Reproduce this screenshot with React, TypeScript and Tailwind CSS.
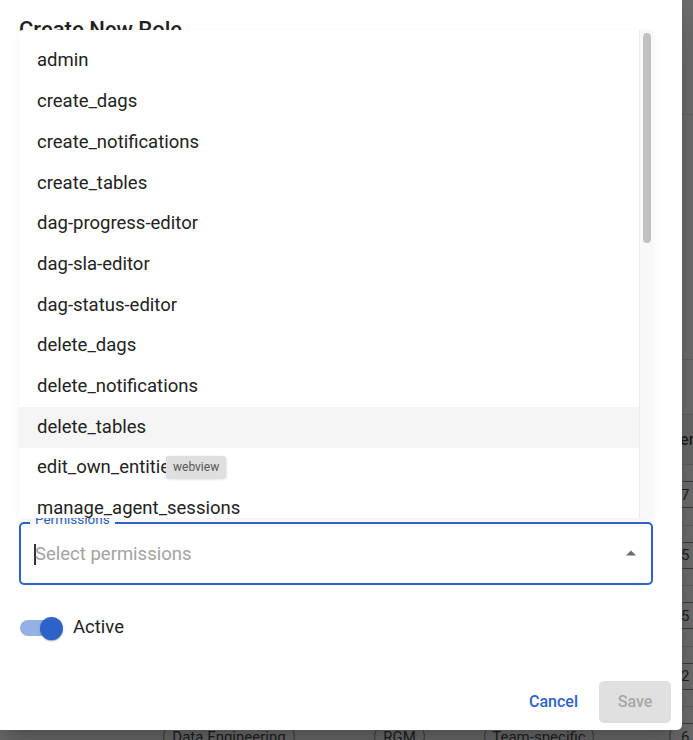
import React from "react";

const items = [
  "admin",
  "create_dags",
  "create_notifications",
  "create_tables",
  "dag-progress-editor",
  "dag-sla-editor",
  "dag-status-editor",
  "delete_dags",
  "delete_notifications",
  "delete_tables",
  "edit_own_entities",
  "manage_agent_sessions",
  "manage_roles",
];

const rowCounts = ["7", "5", "5", "2", "6"];

const chip =
  "shrink-0 whitespace-nowrap h-[27px] rounded-full border border-[#3a3a3a] flex items-center justify-center text-[15px] text-[#1e1e1e]";

function BgRow({ n }: { n: string }) {
  return (
    <div className="h-[60.5px] flex items-center border-b border-[#5e5e5e] pl-[163px] shrink-0">
      <div className={chip + " w-[132px]"}>Data Engineering</div>
      <div className={chip + " ml-[79px] w-[51px]"}>RGM</div>
      <div className={chip + " ml-[59px] w-[110px]"}>Team-specific</div>
      <div className={chip + " ml-[75px] pl-[11px] pr-[10px]"}>{n} permissions</div>
    </div>
  );
}

export default function App() {
  return (
    <div
      className="relative w-full h-[740px] overflow-hidden bg-[#6c6c6c]"
      style={{ fontFamily: "Roboto, 'Noto Sans', sans-serif" }}
    >
      {/* background table under the overlay */}
      <div className="flex flex-col">
        <div className="h-[115px] border-b border-[#606060] shrink-0" />
        <div className="h-[245px] border-b border-[#606060] shrink-0" />
        <div className="h-[55px] border-b border-[#606060] shrink-0" />
        <div className="h-[50px] flex items-center border-b border-[#5e5e5e] bg-[#686868] pl-[670px] shrink-0 text-[16px] font-medium text-[#1e1e1e] whitespace-nowrap">
          Permissions
        </div>
        {rowCounts.map((n, i) => (
          <BgRow key={i} n={n} />
        ))}
      </div>

      {/* dialog */}
      <div className="absolute left-0 top-0 w-[682px] h-[730px] bg-white rounded-br-[5px] shadow-[0_11px_15px_-7px_rgba(0,0,0,0.2),0_24px_38px_3px_rgba(0,0,0,0.14)] flex flex-col">
        <div className="pl-[19px] pr-[29px] flex flex-col">
          <div className="pt-[14px] text-[22px] leading-[32px] font-medium text-[#1f1f1f]">
            Create New Role
          </div>
          {/* permissions field */}
          <div className="mt-[476px] relative h-[63px] border-2 border-[#2d63c8] rounded-[5px]">
            <div className="absolute left-[9px] top-[-13px] px-[5px] bg-white text-[13.5px] leading-[16px] text-[#2d63c8]">
              Permissions
            </div>
            <div className="h-full flex items-center pl-[13px] pt-[2px]">
              <span className="w-[1.5px] h-[21px] bg-[#333]" />
              <span className="text-[18.5px] text-[#a3a3a3] ml-[-0.5px]">Select permissions</span>
            </div>
            <svg
              className="absolute right-[15px] top-[26px]"
              width="10"
              height="6"
              viewBox="0 0 10 6"
            >
              <polygon points="0,5.5 5,0.5 10,5.5" fill="#6b6b6b" />
            </svg>
          </div>
          {/* switch */}
          <div className="mt-[31px] h-[24px] flex items-center">
            <div className="ml-[1px] relative w-[39px] h-[16px] rounded-full bg-[#94b0e4]">
              <div className="absolute left-[20px] top-[-3.5px] w-[23px] h-[23px] rounded-full bg-[#2d63c8] shadow-[0_2px_1px_-1px_rgba(0,0,0,0.2),0_1px_1px_0_rgba(0,0,0,0.14),0_1px_3px_0_rgba(0,0,0,0.12)]" />
            </div>
            <span className="ml-[14px] text-[18.5px] text-[#222]">Active</span>
          </div>
        </div>
        {/* actions */}
        <div className="mt-[41px] pr-[11px] flex justify-end items-center gap-[13px]">
          <button className="h-[42px] px-[8px] text-[16px] font-medium text-[#2d63c8]">
            Cancel
          </button>
          <button className="w-[72px] h-[42px] rounded-[5px] bg-[#e0e0e0] text-[16px] font-medium text-[#a6a6a6]">
            Save
          </button>
        </div>
      </div>

      {/* dropdown menu */}
      <div className="absolute left-[19px] top-[30px] w-[634px] h-[488px] bg-white rounded-[4px] overflow-hidden flex shadow-[0_2px_6px_rgba(0,0,0,0.06)]">
        <div className="flex-1 flex flex-col pt-[11px]">
          {items.map((it) => (
            <div
              key={it}
              className={
                "h-[40.7px] shrink-0 flex items-center pl-[18px] text-[18.5px] text-[#222] " +
                (it === "delete_tables" ? "bg-[#f5f5f5]" : "")
              }
            >
              {it}
            </div>
          ))}
        </div>
        <div className="w-[14px] bg-[#f8f8f8] border-l border-[#ececec] pt-[3px] flex justify-center">
          <div className="w-[8px] h-[210px] rounded-full bg-[#c1c1c1]" />
        </div>
      </div>

      {/* tooltip */}
      <div className="absolute left-[166px] top-[456px] h-[22px] px-[7px] flex items-center rounded-[3px] bg-[#dfdfdf] text-[12px] text-[#555] shadow-[0_1px_3px_rgba(0,0,0,0.2)]">
        webview
      </div>
    </div>
  );
}
